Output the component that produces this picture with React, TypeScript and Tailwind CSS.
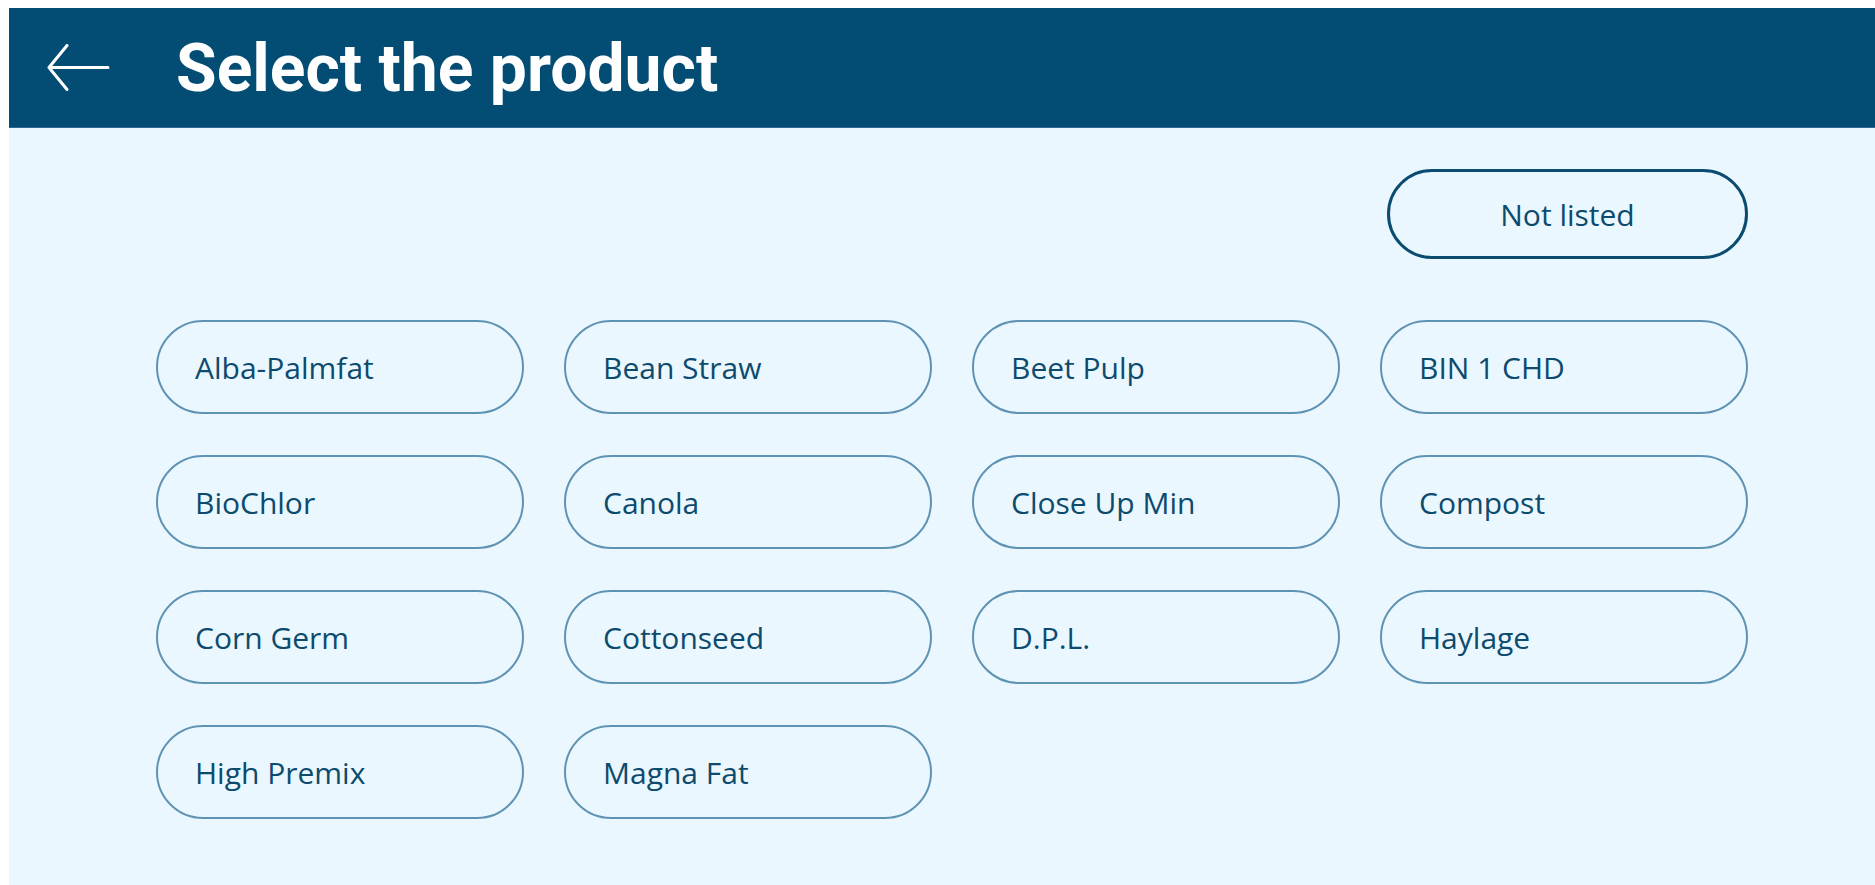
const products = [
  "Alba-Palmfat",
  "Bean Straw",
  "Beet Pulp",
  "BIN 1 CHD",
  "BioChlor",
  "Canola",
  "Close Up Min",
  "Compost",
  "Corn Germ",
  "Cottonseed",
  "D.P.L.",
  "Haylage",
  "High Premix",
  "Magna Fat",
];

function BackArrow() {
  return (
    <svg width="64" height="48" viewBox="0 0 64 48" fill="none">
      <path
        d="M62 23.5H3M21 1.5L3 23.5L21 45.5"
        stroke="white"
        strokeWidth="3"
        strokeLinecap="round"
        strokeLinejoin="round"
      />
    </svg>
  );
}

export default function App() {
  return (
    <div className="min-h-screen bg-white pl-[9px] pt-[8px]">
      <div className="flex min-h-[877px] flex-col bg-[#ebf7fe]">
        {/* Header */}
        <div className="flex h-[120px] items-center border-b border-[#2d6a8d] bg-[#034d74]">
          <button className="ml-[37px] flex h-[48px] w-[64px] items-center">
            <BackArrow />
          </button>
          <h1
            className="ml-[66px] pt-[3px] text-[66px] font-bold leading-none text-white"
            style={{ fontFamily: "Roboto, 'Liberation Sans', sans-serif" }}
          >
            Select the product
          </h1>
        </div>

        {/* Body */}
        <div
          className="flex flex-col pl-[147px] pr-[127px]"
          style={{ fontFamily: "'Open Sans', 'Liberation Sans', sans-serif" }}
        >
          <div className="mt-[41px] flex justify-end">
            <button className="h-[90px] w-[361px] rounded-full border-[3px] border-[#0b4b70] text-[30px] text-[#0d4b6e]">
              Not listed
            </button>
          </div>

          <div className="mt-[61px] grid grid-cols-[repeat(4,368px)] gap-x-[40px] gap-y-[41px]">
            {products.map((name) => (
              <button
                key={name}
                className="flex h-[94px] items-center rounded-full border-2 border-[#5f93b3] pl-[37px] text-left text-[30px] text-[#0d4b6e]"
              >
                {name}
              </button>
            ))}
          </div>
        </div>
      </div>
    </div>
  );
}
